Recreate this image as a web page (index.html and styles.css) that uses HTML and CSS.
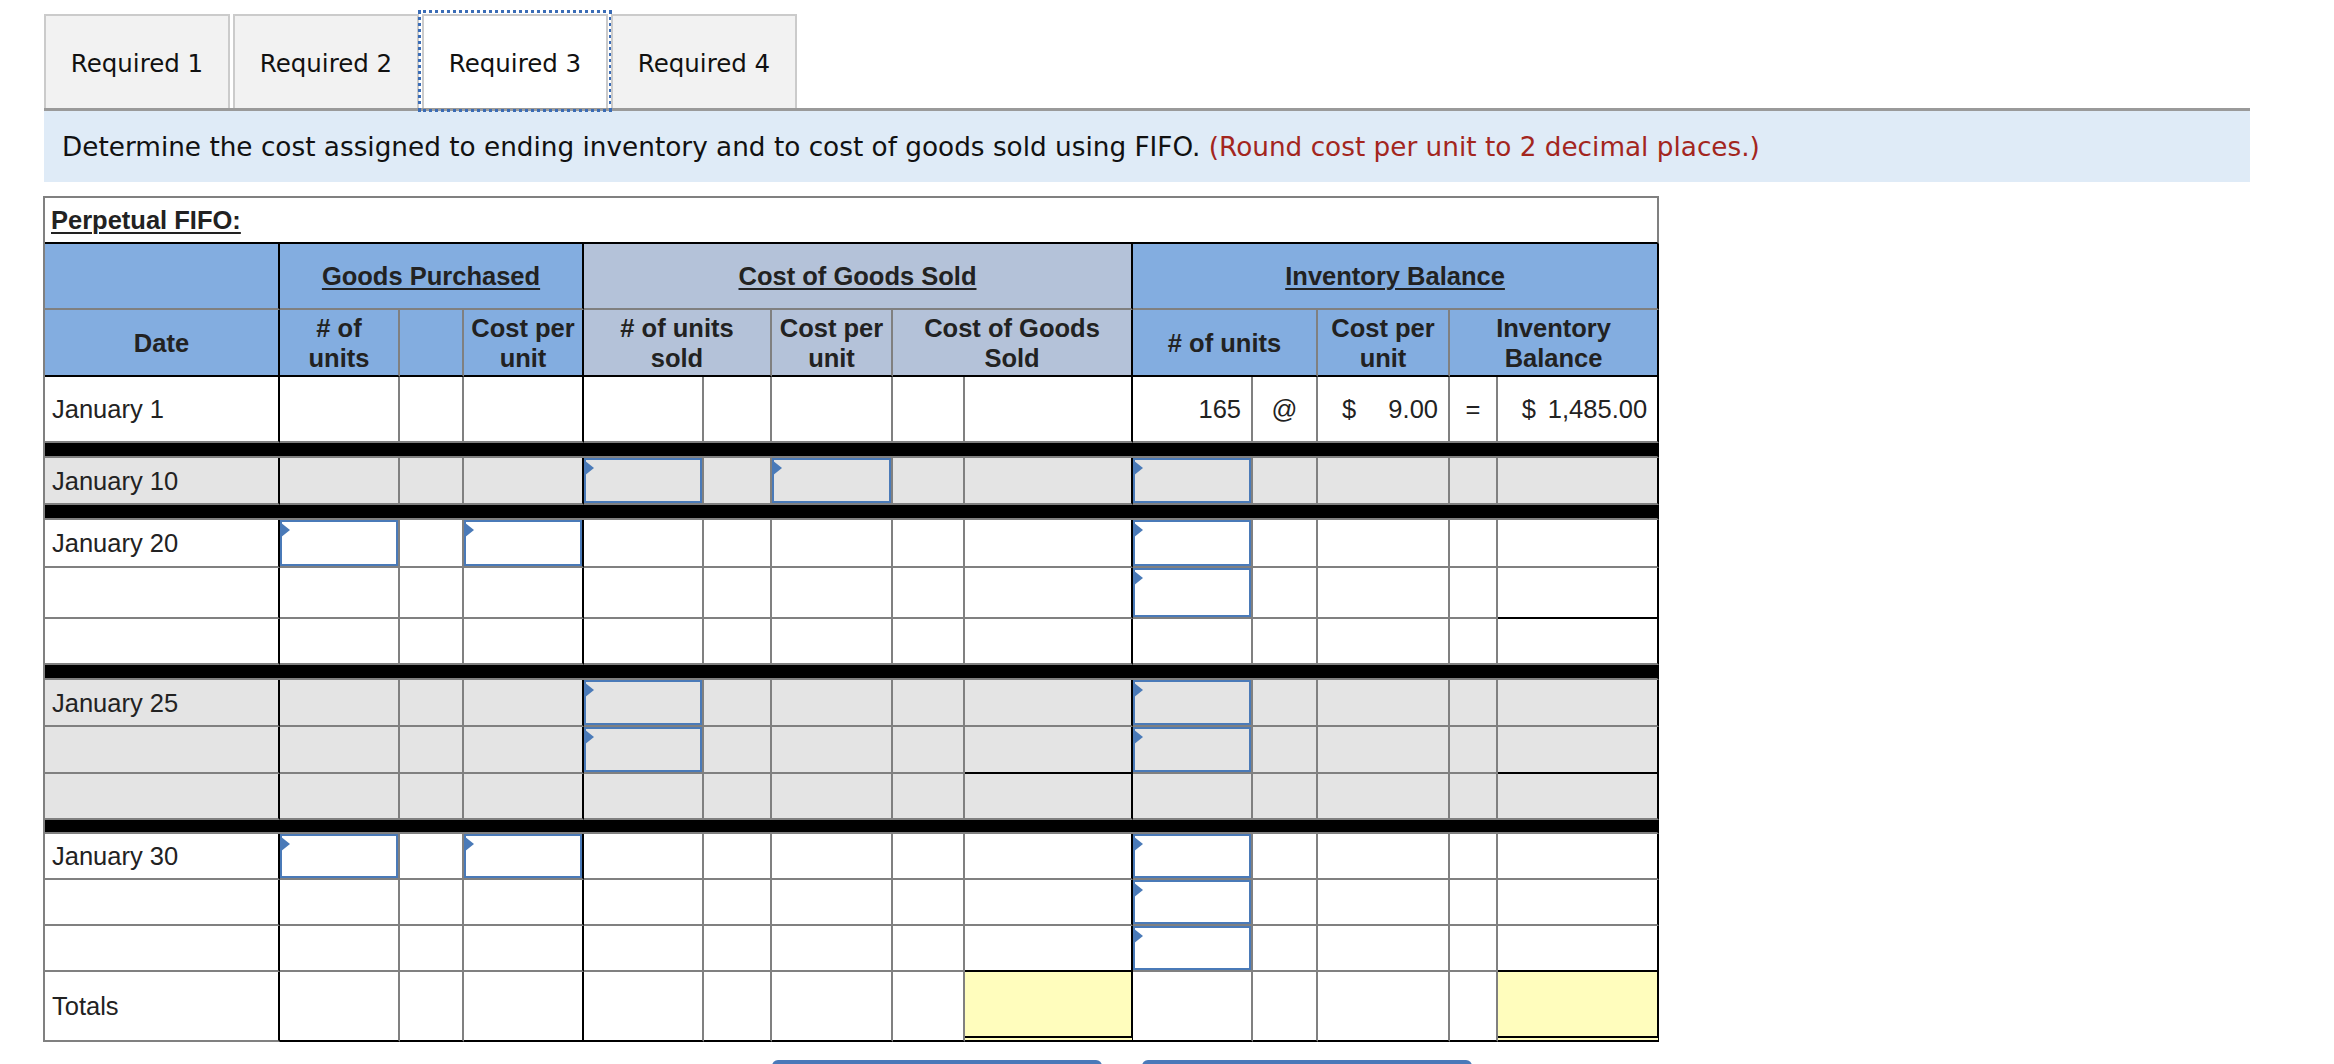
FILE: index.html
```html
<!DOCTYPE html>
<html>
<head>
<meta charset="utf-8">
<title>Perpetual FIFO</title>
<link rel="stylesheet" href="styles.css">
</head>
<body>
<div class="page">
  <div class="tabs">
    <div class="tab">Required 1</div>
    <div class="tab">Required 2</div>
    <div class="tab active">Required 3</div>
    <div class="tab">Required 4</div>
  </div>
  <div class="band">Determine the cost assigned to ending inventory and to cost of goods sold using FIFO. <span class="note">(Round cost per unit to 2 decimal places.)</span></div>

  <table class="fifo">
    <colgroup>
      <col class="w235"><col class="w120"><col class="w64"><col class="w120">
      <col class="w120"><col class="w68"><col class="w121"><col class="w72"><col class="w168">
      <col class="w120"><col class="w65"><col class="w132"><col class="w48"><col class="w161">
    </colgroup>
    <tr class="h46"><td colspan="14" class="title"><span class="ul">Perpetual FIFO:</span></td></tr>
    <tr class="h66 hr1">
      <td class="hb s"></td>
      <td colspan="3" class="hb s"><span class="ul">Goods Purchased</span></td>
      <td colspan="5" class="hg s"><span class="ul">Cost of Goods Sold</span></td>
      <td colspan="5" class="hb s"><span class="ul">Inventory Balance</span></td>
    </tr>
    <tr class="h67 hr2">
      <td class="hb s">Date</td>
      <td class="hb"># of<br>units</td>
      <td class="hb"></td>
      <td class="hb s">Cost per<br>unit</td>
      <td colspan="2" class="hg"># of units<br>sold</td>
      <td class="hg">Cost per<br>unit</td>
      <td colspan="2" class="hg s">Cost of Goods<br>Sold</td>
      <td colspan="2" class="hb"># of units</td>
      <td class="hb">Cost per<br>unit</td>
      <td colspan="2" class="hb s">Inventory<br>Balance</td>
    </tr>

    <tr class="h66">
      <td class="d s">January 1</td><td></td><td></td><td class="s"></td>
      <td></td><td></td><td></td><td></td><td class="s"></td>
      <td class="n">165</td><td class="c">@</td>
      <td><div class="money"><span>$</span><span>9.00</span></div></td>
      <td class="c">=</td><td class="n s"><span class="cur">$</span>1,485.00</td>
    </tr>
    <tr class="sep"><td colspan="14" class="s"></td></tr>

    <tr class="h47 g">
      <td class="d s">January 10</td><td></td><td></td><td class="s"></td>
      <td class="in"><i class="tri"></i></td><td></td><td class="in"><i class="tri"></i></td><td></td><td class="s"></td>
      <td class="in"><i class="tri"></i></td><td></td><td></td><td></td><td class="s"></td>
    </tr>
    <tr class="sep"><td colspan="14" class="s"></td></tr>

    <tr class="h48">
      <td class="d s">January 20</td><td class="in"><i class="tri"></i></td><td></td><td class="in s"><i class="tri"></i></td>
      <td></td><td></td><td></td><td></td><td class="s"></td>
      <td class="in"><i class="tri"></i></td><td></td><td></td><td></td><td class="s"></td>
    </tr>
    <tr class="h51">
      <td class="d s"></td><td></td><td></td><td class="s"></td>
      <td></td><td></td><td></td><td></td><td class="s"></td>
      <td class="in"><i class="tri"></i></td><td></td><td></td><td></td><td class="s bb"></td>
    </tr>
    <tr class="h46">
      <td class="d s"></td><td></td><td></td><td class="s"></td>
      <td></td><td></td><td></td><td></td><td class="s"></td>
      <td></td><td></td><td></td><td></td><td class="s"></td>
    </tr>
    <tr class="sep"><td colspan="14" class="s"></td></tr>

    <tr class="h47 g">
      <td class="d s">January 25</td><td></td><td></td><td class="s"></td>
      <td class="in"><i class="tri"></i></td><td></td><td></td><td></td><td class="s"></td>
      <td class="in"><i class="tri"></i></td><td></td><td></td><td></td><td class="s"></td>
    </tr>
    <tr class="h47 g">
      <td class="d s"></td><td></td><td></td><td class="s"></td>
      <td class="in"><i class="tri"></i></td><td></td><td></td><td></td><td class="s bb"></td>
      <td class="in"><i class="tri"></i></td><td></td><td></td><td></td><td class="s bb"></td>
    </tr>
    <tr class="h46 g">
      <td class="d s"></td><td></td><td></td><td class="s"></td>
      <td></td><td></td><td></td><td></td><td class="s"></td>
      <td></td><td></td><td></td><td></td><td class="s"></td>
    </tr>
    <tr class="sep sep14"><td colspan="14" class="s"></td></tr>

    <tr class="h46">
      <td class="d s">January 30</td><td class="in"><i class="tri"></i></td><td></td><td class="in s"><i class="tri"></i></td>
      <td></td><td></td><td></td><td></td><td class="s"></td>
      <td class="in"><i class="tri"></i></td><td></td><td></td><td></td><td class="s"></td>
    </tr>
    <tr class="h46">
      <td class="d s"></td><td></td><td></td><td class="s"></td>
      <td></td><td></td><td></td><td></td><td class="s"></td>
      <td class="in"><i class="tri"></i></td><td></td><td></td><td></td><td class="s"></td>
    </tr>
    <tr class="h46">
      <td class="d s"></td><td></td><td></td><td class="s"></td>
      <td></td><td></td><td></td><td></td><td class="s bb"></td>
      <td class="in"><i class="tri"></i></td><td></td><td></td><td></td><td class="s bb"></td>
    </tr>
    <tr class="h70 totals">
      <td class="d s">Totals</td><td></td><td></td><td class="s"></td>
      <td></td><td></td><td></td><td></td><td class="s tot"></td>
      <td></td><td></td><td></td><td></td><td class="s tot"></td>
    </tr>
  </table>

  <div class="nav">
    <div class="btn"></div>
    <div class="btn"></div>
  </div>
</div>
</body>
</html>
```

FILE: styles.css
```css
* { box-sizing: border-box; }
html, body { margin: 0; padding: 0; background: #fff; }

.page { padding: 14px 0 0 44px; }

.tabs { display: flex; gap: 3px; height: 94px; }
.tab {
  width: 186px;
  height: 94px;
  border: 2px solid #cbcbcb;
  border-bottom: none;
  background: #f2f2f2;
  display: flex;
  align-items: center;
  justify-content: center;
  padding-top: 2px;
  font-family: "DejaVu Sans", Verdana, sans-serif;
  font-size: 24.5px;
  color: #111;
}
.tab.active {
  background: #fff;
  outline: 3px dotted #3a6cb6;
  outline-offset: 1px;
}

.band {
  width: 2206px;
  height: 74px;
  border-top: 3px solid #9a9a9a;
  background: #dfebf7;
  padding-left: 18px;
  display: flex;
  align-items: center;
  font-family: "DejaVu Sans", Verdana, sans-serif;
  font-size: 26.3px;
  color: #111;
  white-space: pre;
}
.note { color: #a3261e; }

.fifo {
  margin: 14px 0 0 -1px;
  width: 1616px;
  table-layout: fixed;
  border-collapse: separate;
  border-spacing: 0;
  border-left: 2px solid #808080;
  border-top: 2px solid #808080;
  font-family: "Liberation Sans", Arial, sans-serif;
  font-size: 25.5px;
  color: #222;
}
.w235 { width: 235px; } .w120 { width: 120px; } .w64 { width: 64px; }
.w68 { width: 68px; } .w121 { width: 121px; } .w72 { width: 72px; }
.w168 { width: 168px; } .w65 { width: 65px; } .w132 { width: 132px; }
.w48 { width: 48px; } .w161 { width: 161px; }

.fifo td {
  border-right: 2px solid #808080;
  border-bottom: 2px solid #808080;
  padding: 0;
  vertical-align: middle;
  line-height: 30px;
}
.fifo td.s { border-right-color: #000; }
.fifo td.bb { border-bottom-color: #000; }

.h46 { height: 46px; } .h47 { height: 47px; }
.h48 { height: 48px; } .h51 { height: 51px; } .h66 { height: 66px; }
.h67 { height: 67px; } .h70 { height: 70px; }

.fifo td.title {
  border-bottom-color: #000;
  font-weight: bold;
  padding-left: 6px;
}
.ul { text-decoration: underline; text-decoration-thickness: 2px; text-underline-offset: 3px; }

.fifo td.hb, .fifo td.hg { font-weight: bold; text-align: center; }
.fifo td.hb { background: #83ade0; }
.fifo td.hg { background: #b4c2d9; }
.hr2 td { border-bottom-color: #000 !important; }

.fifo td.d { padding-left: 7px; }
.fifo td.n { text-align: right; padding-right: 10px; }
.fifo td.c { text-align: center; }
.money { display: flex; justify-content: space-between; padding: 0 10px 0 24px; }
.cur { margin-right: 12px; }

tr.g { background: #e4e4e4; }

tr.sep { height: 15px; }
tr.sep14 { height: 14px; }
tr.sep td { background: #000; }

.fifo td.in {
  vertical-align: top;
  padding-top: 2px;
  box-shadow: inset 0 0 0 2px #4a7ab8;
}
.tri {
  display: block;
  width: 0;
  height: 0;
  border-left: 10px solid #4a7ab8;
  border-top: 8px solid transparent;
  border-bottom: 8px solid transparent;
}

.totals td { border-bottom-color: #000; }
.totals td.d { border-bottom-color: #808080; }
.fifo td.tot {
  background: #fffdbd;
  border-bottom: 6px double #000;
}

.nav { display: flex; gap: 40px; margin: 18px 0 0 728px; }
.btn {
  width: 330px;
  height: 56px;
  background: #4a79b9;
  border-radius: 6px;
}
```
